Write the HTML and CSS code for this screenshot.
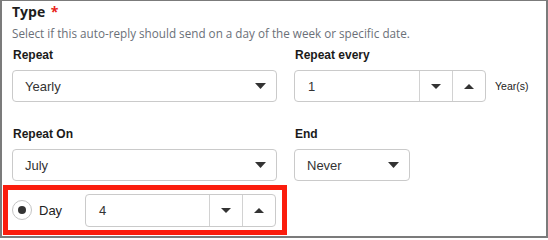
FILE: index.html
```html
<!DOCTYPE html>
<html lang="en">
<head>
<meta charset="utf-8">
<title>Type</title>
<link rel="stylesheet" href="styles.css">
</head>
<body>
<div class="frame">
  <div class="title">Type <span class="req">*</span></div>
  <div class="desc">Select if this auto-reply should send on a day of the week or specific date.</div>
  <div class="grid">
    <div class="field">
      <div class="label">Repeat</div>
      <div class="select">
        <span class="value">Yearly</span>
        <svg class="caret" width="11" height="6" viewBox="0 0 11 6"><polygon points="0,0 11,0 5.5,6" fill="#333"/></svg>
      </div>
    </div>
    <div class="field">
      <div class="label">Repeat every</div>
      <div class="inline">
        <div class="spin spin-every">
          <span class="value">1</span>
          <span class="btn"><svg width="10" height="5" viewBox="0 0 10 5"><polygon points="0,0 10,0 5,5" fill="#333"/></svg></span>
          <span class="btn"><svg width="10" height="5" viewBox="0 0 10 5"><polygon points="0,5 10,5 5,0" fill="#333"/></svg></span>
        </div>
        <span class="unit">Year(s)</span>
      </div>
    </div>
    <div class="field">
      <div class="label">Repeat On</div>
      <div class="select">
        <span class="value">July</span>
        <svg class="caret" width="11" height="6" viewBox="0 0 11 6"><polygon points="0,0 11,0 5.5,6" fill="#333"/></svg>
      </div>
      <div class="highlight">
        <span class="radio"><span class="dot"></span></span>
        <span class="day">Day</span>
        <div class="spin spin-day">
          <span class="value">4</span>
          <span class="btn"><svg width="10" height="5" viewBox="0 0 10 5"><polygon points="0,0 10,0 5,5" fill="#333"/></svg></span>
          <span class="btn"><svg width="10" height="5" viewBox="0 0 10 5"><polygon points="0,5 10,5 5,0" fill="#333"/></svg></span>
        </div>
      </div>
    </div>
    <div class="field">
      <div class="label">End</div>
      <div class="select select-end">
        <span class="value">Never</span>
        <svg class="caret" width="11" height="6" viewBox="0 0 11 6"><polygon points="0,0 11,0 5.5,6" fill="#333"/></svg>
      </div>
    </div>
  </div>
</div>
</body>
</html>
```
FILE: styles.css
```css
html, body {
  margin: 0;
  padding: 0;
  background: #ffffff;
}

.frame {
  width: 548px;
  height: 238px;
  box-sizing: border-box;
  border: 2px solid #7b7b7b;
  border-top-width: 1px;
  padding: 1px 10px 0 10px;
  overflow: hidden;
  font-family: "Liberation Sans", Arial, sans-serif;
  color: #222;
}

.title {
  font-family: "Open Sans", "Noto Sans", sans-serif;
  font-weight: 700;
  font-size: 14px;
  line-height: 20px;
  height: 20px;
  color: #1d1d1d;
}

.req {
  color: #e8231a;
  font-weight: 700;
  margin-left: 2px;
}

.desc {
  margin-top: 3px;
  font-family: "Open Sans", "Noto Sans", sans-serif;
  font-size: 11.7px;
  line-height: 16px;
  color: #6b7078;
}

.grid {
  margin-top: 7px;
  display: grid;
  grid-template-columns: 265px 1fr;
  column-gap: 17px;
  row-gap: 25px;
}

.field {
  display: flex;
  flex-direction: column;
  align-items: flex-start;
}

.label {
  font-weight: 700;
  font-size: 12px;
  line-height: 14px;
  color: #1a1a1a;
  margin-bottom: 8px;
  padding-left: 1px;
}

.select {
  box-sizing: border-box;
  width: 265px;
  height: 32px;
  border: 1px solid #cacaca;
  border-radius: 4px;
  display: flex;
  align-items: center;
  justify-content: space-between;
  padding: 0 10px 0 12px;
  font-size: 13px;
  color: #333;
}

.select-end {
  width: 116px;
}

.inline {
  display: flex;
  align-items: center;
  gap: 9px;
}

.spin {
  box-sizing: border-box;
  height: 32px;
  border: 1px solid #cacaca;
  border-radius: 4px;
  display: flex;
  align-items: stretch;
  font-size: 13px;
  color: #333;
}

.spin-every {
  width: 192px;
}

.spin-day {
  width: 191px;
  height: 33px;
}

.spin .value {
  flex: 1;
  display: flex;
  align-items: center;
  padding-left: 13px;
}

.spin .btn {
  width: 32px;
  border-left: 1px solid #d2d2d2;
  display: flex;
  align-items: center;
  justify-content: center;
}

.unit {
  font-size: 10.5px;
  color: #222;
}

.highlight {
  box-sizing: border-box;
  margin: 4px -10px 0 -9px;
  width: 284px;
  height: 50px;
  border: 5px solid #fb1d0d;
  display: flex;
  align-items: center;
  padding: 0 5px 0 4px;
}

.radio {
  box-sizing: border-box;
  width: 20px;
  height: 20px;
  border: 1px solid #c4c4c4;
  border-radius: 50%;
  display: flex;
  align-items: center;
  justify-content: center;
  flex: none;
}

.dot {
  width: 8px;
  height: 8px;
  border-radius: 50%;
  background: #333;
}

.day {
  margin-left: 7px;
  width: 46px;
  font-size: 13px;
  color: #222;
}
```
